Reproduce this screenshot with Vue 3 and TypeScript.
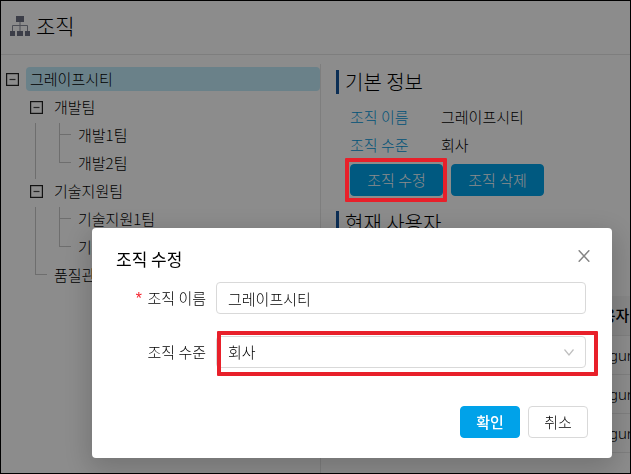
<script setup lang="ts">
import { ref } from 'vue'

interface TreeRow {
  label: string
  level: number
  open?: boolean
  selected?: boolean
  // one entry per guide column: 'line' | 'none'
  guides: string[]
  leaf?: 'mid' | 'end'
}

const rows: TreeRow[] = [
  { label: '그레이프시티', level: 0, open: true, selected: true, guides: [] },
  { label: '개발팀', level: 1, open: true, guides: ['none'] },
  { label: '개발1팀', level: 2, guides: ['none', 'line'], leaf: 'mid' },
  { label: '개발2팀', level: 2, guides: ['none', 'line'], leaf: 'end' },
  { label: '기술지원팀', level: 1, open: true, guides: ['none'] },
  { label: '기술지원1팀', level: 2, guides: ['none', 'line'], leaf: 'mid' },
  { label: '기술지원2팀', level: 2, guides: ['none', 'line'], leaf: 'end' },
  { label: '품질관리팀', level: 1, guides: ['none'], leaf: 'end' },
].map((row) => ({
  ...row,
  guides: row.level === 2 ? ['none', 'line'] : row.guides,
})) as TreeRow[]

const users = ['malgun', 'malgun', 'malgun']
const orgName = ref('그레이프시티')
const orgLevel = ref('회사')
</script>

<template>
  <div class="page">
    <header class="top">
      <svg class="logo" viewBox="0 0 20 20" width="20" height="20" aria-hidden="true">
        <path d="M6 0h8v6H6zM0 15h5v5H0zM7 15h6v5H7zM15 15h5v5h-5z" fill="#6d7284" />
        <path d="M10 6v9M2.5 15V9.5h15V15" fill="none" stroke="#8b8f9c" stroke-width="1" />
      </svg>
      <h1>조직</h1>
    </header>

    <div class="body">
      <nav class="tree">
        <div v-for="row in rows" :key="row.label" class="row">
          <span
            v-for="(g, i) in row.guides"
            :key="i"
            class="guide"
            :class="{ line: g === 'line' && i < row.guides.length - 1, trunk: g === 'line' }"
          ></span>
          <button v-if="row.open" type="button" class="switch" :aria-label="row.label">
            <svg viewBox="0 0 13 13" width="13" height="13">
              <rect x="0.6" y="0.6" width="11.8" height="11.8" fill="none" stroke="#222" stroke-width="1.2" />
              <path d="M3.5 6.5h6" stroke="#444" stroke-width="1.2" />
            </svg>
          </button>
          <span v-else class="leaf" :class="row.leaf"></span>
          <span class="name" :class="{ selected: row.selected }">{{ row.label }}</span>
        </div>
      </nav>

      <main class="main">
        <h2>기본 정보</h2>
        <dl class="info">
          <dt>조직 이름</dt>
          <dd>그레이프시티</dd>
          <dt>조직 수준</dt>
          <dd>회사</dd>
        </dl>
        <div class="actions">
          <span class="marked">
            <button type="button" class="btn primary">조직 수정</button>
            <i class="mark mark-button"></i>
          </span>
          <button type="button" class="btn primary">조직 삭제</button>
        </div>
        <h2>현재 사용자</h2>
        <table>
          <thead>
            <tr><th></th><th>사용자</th></tr>
          </thead>
          <tbody>
            <tr v-for="(u, i) in users" :key="i"><td></td><td>{{ u }}</td></tr>
          </tbody>
        </table>
      </main>
    </div>
  </div>

  <div class="mask">
    <form class="modal" role="dialog" aria-labelledby="dlg-title" @submit.prevent>
      <div class="modal-head">
        <h3 id="dlg-title">조직 수정</h3>
        <button type="button" class="close" aria-label="닫기">
          <svg viewBox="0 0 12 12" width="12" height="12">
            <path d="M0.7 0.3L11.3 11.7M11.3 0.3L0.7 11.7" stroke="#858585" stroke-width="1.5" />
          </svg>
        </button>
      </div>
      <div class="field">
        <label for="org-name"><span class="req">*</span>조직 이름</label>
        <input id="org-name" v-model="orgName" type="text" />
      </div>
      <div class="field">
        <label for="org-level">조직 수준</label>
        <div class="select">
          <select id="org-level" v-model="orgLevel">
            <option>회사</option>
          </select>
          <svg class="chev" viewBox="0 0 10 7" width="10" height="7" aria-hidden="true">
            <path d="M0.5 0.5L5 6L9.5 0.5" fill="none" stroke="#bfbfbf" stroke-width="1.2" />
          </svg>
          <i class="mark mark-select"></i>
        </div>
      </div>
      <div class="modal-foot">
        <button type="submit" class="btn primary strong">확인</button>
        <button type="button" class="btn">취소</button>
      </div>
    </form>
  </div>
</template>

<style>
body {
  margin: 0;
  overflow: hidden;
}
</style>

<style scoped>
* {
  box-sizing: border-box;
}
.page,
.mask {
  font-family: 'Noto Sans CJK KR', sans-serif;
  font-size: 15px;
  line-height: 24px;
  font-weight: 300;
  color: #000;
}
.page {
  display: flex;
  flex-direction: column;
  height: 100vh;
  border: 1px solid #000;
  background: #fff;
  overflow: hidden;
}
button,
input,
select {
  font: inherit;
  color: inherit;
  margin: 0;
}
h1,
h2,
h3,
dl,
dd {
  margin: 0;
  font-weight: inherit;
}
.top {
  display: flex;
  flex: none;
  align-items: flex-start;
  gap: 6px;
  height: 54px;
  padding: 12px 9px 0;
  border-bottom: 1px solid #e6e6e6;
}
.logo {
  margin-top: 3px;
}
h1 {
  font-size: 21px;
}
.body {
  display: flex;
  flex: 1;
  padding-top: 9px;
  min-height: 0;
}
.tree {
  flex: none;
  width: 320px;
  padding-top: 3px;
  border-right: 1px solid #e6e6e6;
}
.row {
  display: flex;
  height: 28px;
}
.guide,
.leaf,
.switch {
  flex: none;
  width: 24px;
}
.switch {
  height: 24px;
  display: flex;
  align-items: center;
  justify-content: center;
  padding: 0 2px 0 0;
  border: 0;
  background: none;
}
.trunk,
.leaf {
  position: relative;
}
.trunk::before,
.leaf::before {
  content: '';
  position: absolute;
  left: 10px;
  top: 0;
  height: 28px;
  border-left: 1px solid #c8c8c8;
}
.leaf::after {
  content: '';
  position: absolute;
  left: 10px;
  top: 11px;
  width: 12px;
  border-top: 1px solid #c8c8c8;
}
.leaf.end::before {
  height: 12px;
}
.name {
  flex: 1;
  height: 24px;
  margin-left: 1px;
  padding-left: 4px;
  border-radius: 4px;
  white-space: nowrap;
}
.selected {
  background: #c2ebfa;
}
.main {
  flex: 1;
  min-width: 0;
  padding: 6px 0 0 15px;
  overflow: hidden;
}
h2 {
  border-left: 3px solid #15549b;
  padding-left: 6px;
  font-size: 20px;
}
.info {
  display: grid;
  grid-template-columns: 91px 1fr;
  row-gap: 4px;
  padding: 11px 14px 7px;
}
dt {
  color: #0098dc;
}
.actions {
  display: flex;
  gap: 8px;
  padding: 0 14px;
  margin-bottom: 15px;
}
.marked {
  position: relative;
}
.btn {
  height: 32px;
  padding: 0 14px;
  border: 1px solid #d9d9d9;
  border-radius: 4px;
  background: #fff;
  line-height: 24px;
  white-space: nowrap;
}
.actions .btn {
  width: 93px;
}
.primary {
  background: #00a2e9;
  border-color: #00a2e9;
  color: #fff;
}
.strong {
  font-weight: 500;
}
.mark {
  position: absolute;
  z-index: 20;
  border: 4px solid #e8202a;
  border-radius: 1px;
  pointer-events: none;
}
.mark-button {
  inset: -6px -4px -6px -5px;
}
.mark-select {
  inset: -5px -12px -8px 1px;
}
table {
  width: 360px;
  margin-top: 61px;
  border-collapse: collapse;
  table-layout: fixed;
}
th,
td {
  height: 39px;
  padding: 0 8px;
  border-bottom: 1px solid #e8e8e8;
  text-align: left;
}
th {
  padding: 0 12px;
  background: #f5f5f5;
  font-weight: 500;
}
td {
  font-family: 'Noto Sans', sans-serif;
}
th:first-child {
  width: 240px;
}
.mask {
  position: fixed;
  inset: 0;
  z-index: 10;
  display: flex;
  align-items: flex-start;
  padding: 228px 19px 0 92px;
  background: rgba(0, 0, 0, 0.45);
}
.modal {
  flex: 1;
  padding: 19px 24px 20px;
  border-radius: 4px;
  background: #fff;
  box-shadow: 0 8px 28px 4px rgba(0, 0, 0, 0.18);
}
.modal-head {
  display: flex;
  align-items: flex-start;
  justify-content: space-between;
  height: 35px;
}
h3 {
  font-size: 17px;
  font-weight: 400;
}
.close {
  display: flex;
  align-items: center;
  justify-content: flex-end;
  width: 24px;
  height: 18px;
  margin-right: -2px;
  padding: 0;
  border: 0;
  background: none;
}
.field {
  display: flex;
  align-items: center;
  margin: 0 2px 22px 0;
}
label {
  flex: none;
  width: 100px;
  padding-right: 10px;
  text-align: right;
}
.req {
  margin-right: 4px;
  color: #f5222d;
  font-family: 'Liberation Mono', monospace;
  font-size: 16px;
  line-height: 1;
  vertical-align: middle;
}
input,
select {
  width: 100%;
  height: 32px;
  padding: 0 11px;
  border: 1px solid #d9d9d9;
  border-radius: 4px;
  background: #fff;
  appearance: none;
}
input {
  flex: 1;
  min-width: 0;
}
.select {
  position: relative;
  flex: 1;
  display: flex;
}
.chev {
  position: absolute;
  right: 12px;
  top: 13px;
}
.modal-foot {
  display: flex;
  justify-content: flex-end;
  gap: 8px;
  padding-top: 16px;
}
.modal-foot .btn {
  width: 60px;
}
</style>
